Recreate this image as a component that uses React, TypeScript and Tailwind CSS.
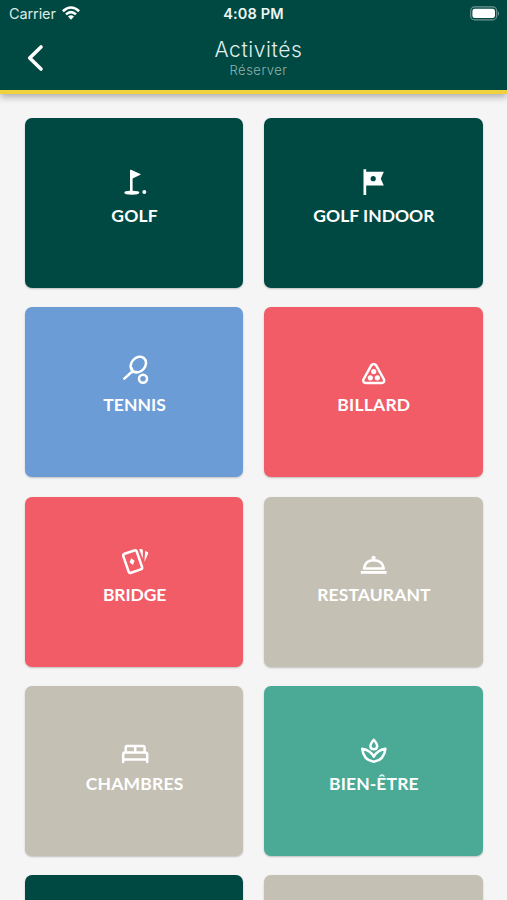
import type { ReactNode } from 'react';

interface Activity {
    label: string;
    color: string;
    tracking: string;
    icon: ReactNode;
}

const activities: Activity[] = [
    {
        label: 'GOLF', color: 'bg-[#004943]', tracking: 'tracking-[0.2px]',
        icon: (
            <g stroke="none" fill="currentColor">
                <path d="M11 4.4Q11 3.4 12 3.8L21.4 7.9Q22 8.3 21.4 8.7L13.6 12.4V24.8Q20.4 24.8 20.4 26.5Q20 28.7 13 28.8Q5.3 28.7 5.3 26.5Q5.5 24.9 11 24.8Z" />
                <circle cx="25.3" cy="26" r="2" />
            </g>
        ),
    },
    {
        label: 'GOLF INDOOR', color: 'bg-[#004943]', tracking: 'tracking-[0px]',
        icon: (
            <path stroke="none" fillRule="evenodd" d="M5.5 3.3H8.2V5.8H25.8L22.8 12.7L25.8 19.6H8.2V29H5.5ZM15.2 10.1A2.6 2.6 0 1 0 15.2 15.3A2.6 2.6 0 1 0 15.2 10.1Z" fill="currentColor" />
        ),
    },
    {
        label: 'TENNIS', color: 'bg-[#6b9cd5]', tracking: 'tracking-[0.1px]',
        icon: (
            <>
                <ellipse cx="19.3" cy="9.6" rx="8.6" ry="6.9" transform="rotate(-48 19.3 9.6)" />
                <path d="M12.9 13.5Q13.5 17 11.5 18L5.3 23.6M11.2 18Q14 16.2 17.5 17" />
                <circle cx="24" cy="23.8" r="4" />
            </>
        ),
    },
    {
        label: 'BILLARD', color: 'bg-[#f15c66]', tracking: 'tracking-[0.2px]',
        icon: (
            <>
                <path d="M13.4 10.2Q15.7 7.8 18 10.2L26 24.5Q26.8 27.9 23.8 28H7.8Q4.6 27.9 5.4 24.5Z" />
                <g fill="currentColor" stroke="none">
                    <circle cx="15.7" cy="16.6" r="2.6" />
                    <circle cx="12.3" cy="22.8" r="2.6" />
                    <circle cx="19.3" cy="22.8" r="2.6" />
                </g>
            </>
        ),
    },
    {
        label: 'BRIDGE', color: 'bg-[#f15c66]', tracking: 'tracking-[-0.1px]',
        icon: (
            <>
                <rect x="6.6" y="6.6" width="14.2" height="20" rx="2" transform="rotate(-19 13.7 16.6)" />
                <path d="M12.2 13.2L15.6 15.8L13.9 20L10.6 17.2Z" fill="currentColor" stroke="none" />
                <path d="M20.2 4.2Q23.4 3.6 23.8 5V13.5ZM26.2 6Q29.4 6.8 29.2 8.6L25.4 17Z" fill="currentColor" stroke="none" />
            </>
        ),
    },
    {
        label: 'RESTAURANT', color: 'bg-[#c5c0b4]', tracking: 'tracking-[0.1px]',
        icon: (
            <>
                <path d="M6 23.4Q7.2 15.3 15.6 15.3Q24.4 15.3 25.8 23.4Z" />
                <path d="M2.8 27.4H28.6" strokeWidth="2.8" strokeLinecap="butt" />
                <circle cx="15.6" cy="12.8" r="2.1" fill="currentColor" stroke="none" />
            </>
        ),
    },
    {
        label: 'CHAMBRES', color: 'bg-[#c5c0b4]', tracking: 'tracking-[0.2px]',
        icon: (
            <>
                <path d="M6.7 18V13.5Q6.7 12 8.2 12H24Q25.6 12 25.6 13.5V18M16.2 12V18" />
                <path d="M4.2 28V20.5Q4.2 18.6 6 18.6H26.4Q28.2 18.6 28.2 20.5V28M4.2 25.4H28.2" />
            </>
        ),
    },
    {
        label: 'BIEN-ÊTRE', color: 'bg-[#4aaa96]', tracking: 'tracking-[0.1px]',
        icon: (
            <>
                <path d="M15.8 5.8Q12.4 9.8 12.4 12.2Q12.6 15.3 15.8 15.3Q19 15.3 19.2 12.2Q19.2 9.8 15.8 5.8Z" />
                <path d="M4.2 14.8Q12.4 16.2 15.8 22.8Q19.2 16.2 27.4 14.8Q26.2 26 15.8 27.8Q5.4 26 4.2 14.8Z" />
            </>
        ),
    },
    { label: '', color: 'bg-[#004943]', tracking: '', icon: null },
    { label: '', color: 'bg-[#c5c0b4]', tracking: '', icon: null },
];

function StatusBar() {
    return (
        <div className="grid h-7 grid-cols-3 items-center pr-[7px] pl-[9px]">
            <div className="flex items-center gap-[6px] font-['Inter',sans-serif] text-[14.5px] text-[#dce9e7]">
                <span className="tracking-[-0.1px]">Carrier</span>
                <svg className="-mt-[2px]" width="18" height="14" viewBox="0 0 18 14" fill="none" stroke="white" strokeWidth="2.6">
                    <path d="M.9 5.2Q9-2.2 17.1 5.2M4 8.4Q9 3.9 14 8.4" />
                    <path d="M6 10.5Q9 7.9 12 10.5L9 13.7Z" fill="white" stroke="none" />
                </svg>
            </div>
            <span className="-ml-[2px] text-center font-['Inter',sans-serif] text-[14.5px] font-semibold tracking-[0.15px] text-[#eef6f5]">4:08 PM</span>
            <svg className="-mt-[2px] justify-self-end" width="31" height="15" viewBox="0 0 31 15">
                <rect x="1.7" y=".9" width="26" height="13" rx="4" fill="none" stroke="#709691" strokeWidth="1.1" />
                <rect x="3.4" y="2.7" width="22.6" height="9.4" rx="2.4" fill="white" />
                <path d="M28.9 5.1Q31.2 7.4 28.9 9.7Z" fill="#709691" />
            </svg>
        </div>
    );
}

function Header() {
    return (
        <header className="h-[94px] border-b-4 border-[#efd23e] bg-[#004943] shadow-[0_3px_7px_rgba(0,0,0,0.3)]">
            <StatusBar />
            <div className="grid grid-cols-[60px_1fr_50px] pt-[9px]">
                <svg className="mt-[7px] ml-[26px]" width="18" height="28" viewBox="0 0 18 28" fill="none" stroke="white" strokeWidth="3.6" strokeLinecap="round" strokeLinejoin="round">
                    <path d="M15 3L3.7 14L15 25" />
                </svg>
                <div className="text-center font-['Inter',sans-serif] font-light">
                    <h1 className="pt-px text-[21px] leading-6 tracking-[0.6px] text-[#e2eeec]">Activités</h1>
                    <p className="text-[13px] leading-[17px] tracking-[0.5px] text-[#91b1ad]">Réserver</p>
                </div>
            </div>
        </header>
    );
}

function ActivityCard({ label, color, tracking, icon }: Activity) {
    return (
        <button className={`flex h-[170px] flex-col items-center rounded-[7px] pt-12 pl-px text-white shadow-[0_1px_2px_rgba(0,0,0,0.22)] ${color}`}>
            {icon && (
                <svg width="32" height="32" viewBox="0 0 32 32" fill="none" stroke="currentColor" strokeWidth="2.5" strokeLinecap="round" strokeLinejoin="round">
                    {icon}
                </svg>
            )}
            <span className={`mt-[5px] font-['Lato',sans-serif] text-[17.5px] leading-[26px] font-bold ${tracking}`}>{label}</span>
        </button>
    );
}

export default function App() {
    return (
        <div className="h-[900px] w-[507px] overflow-hidden bg-[#f5f5f5]">
            <Header />
            <main className="grid grid-cols-2 gap-x-[21px] gap-y-[19.3px] pt-[24px] pr-[24.5px] pl-[25px]">
                {activities.map((a, i) => <ActivityCard key={i} {...a} />)}
            </main>
        </div>
    );
}
